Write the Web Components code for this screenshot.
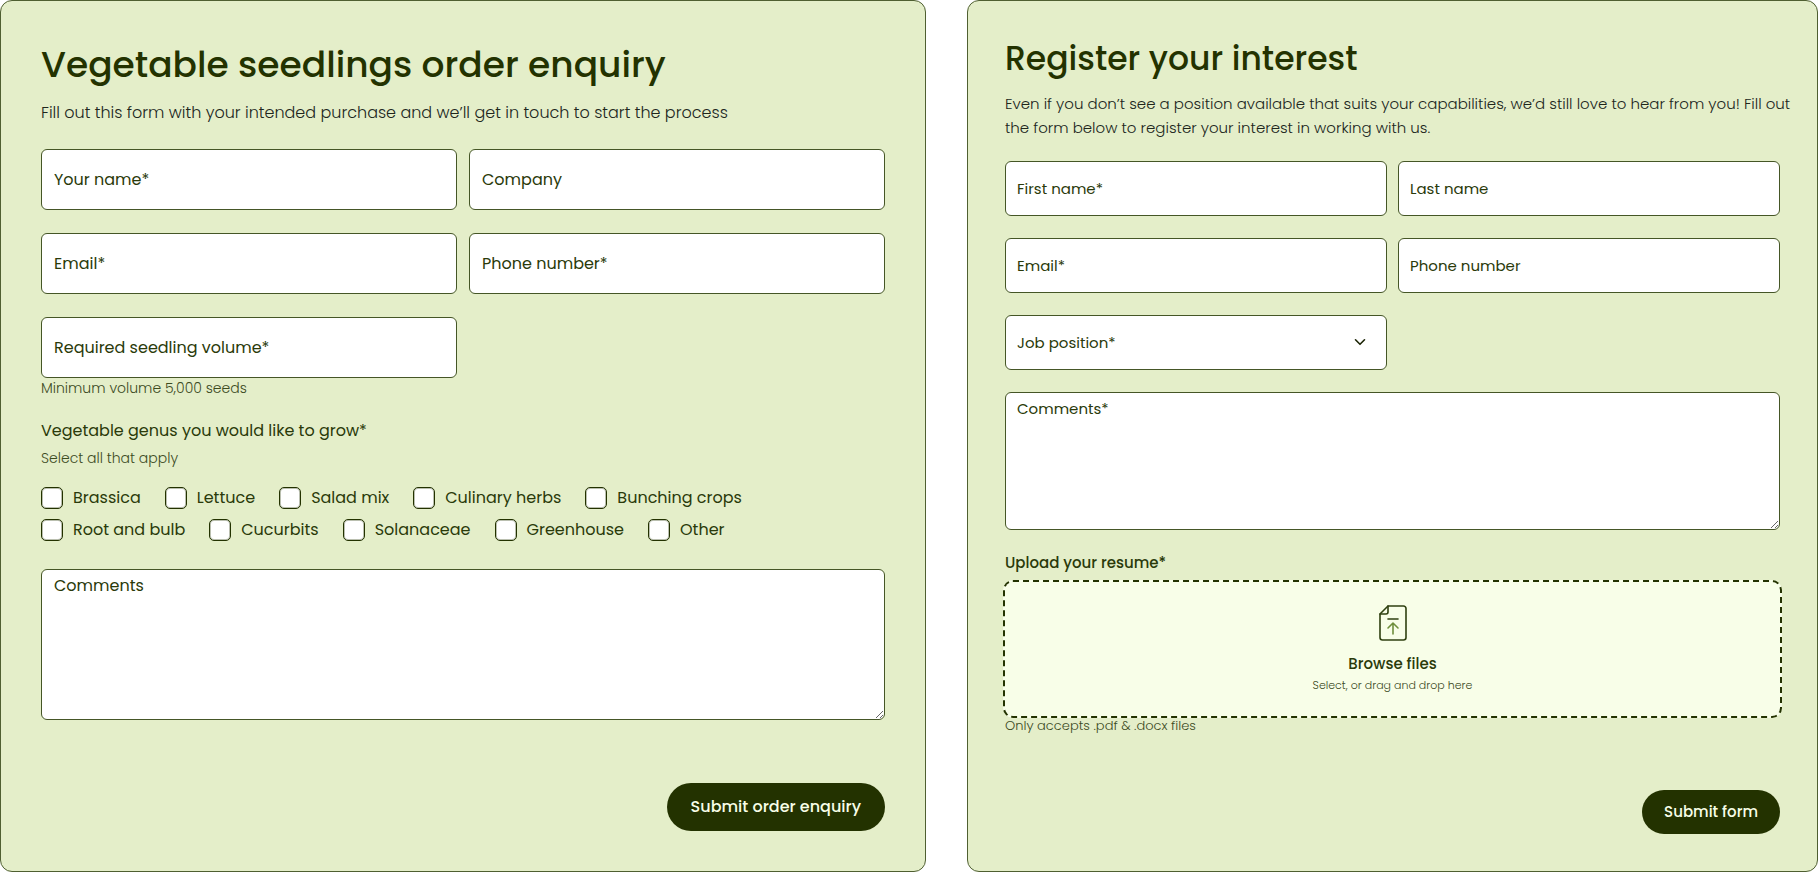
<!DOCTYPE html>
<html lang="en">
<head>
<meta charset="utf-8">
<title>Enquiry forms</title>
<style>
  body { margin: 0; background: #fff; font-family: Poppins, "Noto Sans", sans-serif; color: #2a3a0a; }
  main { display: grid; grid-template-columns: minmax(0, 926fr) minmax(0, 851fr); gap: 41px; }
  .order {
    --pad: 40px; --title: 36px; --title-line: 48px; --text: 16px; --small: 14px; --small-line: 20px;
    --intro-end: 24px; --row: 23px; --col: 12px; --field: 61px; --inset: 12px;
    --area: 151px; --button: 48px; --button-pad: 24px;
  }
  .register {
    --pad: 37px; --title: 33px; --title-line: 42px; --text: 15px; --small: 13px; --small-line: 16px;
    --intro-end: 21px; --row: 22px; --col: 11px; --field: 55px; --inset: 11px;
    --area: 138px; --button: 44px; --button-pad: 22px;
  }
  .genus { margin-top: -2px; }
  .order area-field { margin-top: 5px; }
</style>
</head>
<body>
<main>
  <form-card class="order">
    <span slot="title">Vegetable seedlings order enquiry</span>
    <span slot="intro">Fill out this form with your intended purchase and we’ll get in touch to start the process</span>
    <field-row>
      <text-field label="Your name*"></text-field>
      <text-field label="Company"></text-field>
    </field-row>
    <field-row>
      <text-field label="Email*" type="email"></text-field>
      <text-field label="Phone number*" type="tel"></text-field>
    </field-row>
    <field-row>
      <text-field label="Required seedling volume*">Minimum volume 5,000 seeds</text-field>
    </field-row>
    <check-group class="genus">
      <span slot="legend">Vegetable genus you would like to grow*</span>
      <span slot="hint">Select all that apply</span>
      <check-option>Brassica</check-option>
      <check-option>Lettuce</check-option>
      <check-option>Salad mix</check-option>
      <check-option>Culinary herbs</check-option>
      <check-option>Bunching crops</check-option>
      <check-option slot="more">Root and bulb</check-option>
      <check-option slot="more">Cucurbits</check-option>
      <check-option slot="more">Solanaceae</check-option>
      <check-option slot="more">Greenhouse</check-option>
      <check-option slot="more">Other</check-option>
    </check-group>
    <area-field label="Comments"></area-field>
    <submit-button slot="action">Submit order enquiry</submit-button>
  </form-card>

  <form-card class="register">
    <span slot="title">Register your interest</span>
    <span slot="intro">Even if you don’t see a position available that suits your capabilities, we’d still love to hear from you! Fill out the form below to register your interest in working with us.</span>
    <field-row>
      <text-field label="First name*"></text-field>
      <text-field label="Last name"></text-field>
    </field-row>
    <field-row>
      <text-field label="Email*" type="email"></text-field>
      <text-field label="Phone number" type="tel"></text-field>
    </field-row>
    <field-row>
      <select-field label="Job position*"></select-field>
    </field-row>
    <area-field label="Comments*"></area-field>
    <file-drop>
      <span slot="label">Upload your resume*</span>
      <span slot="hint">Only accepts .pdf &amp; .docx files</span>
    </file-drop>
    <submit-button slot="action">Submit form</submit-button>
  </form-card>
</main>

<script>
const define = (name, html, setup) => customElements.define(name, class extends HTMLElement {
  connectedCallback() {
    if (this.shadowRoot) return;
    const root = this.attachShadow({ mode: 'open' });
    const template = document.createElement('template');
    template.innerHTML = '<style>*{box-sizing:border-box}:host{display:block;min-width:0}</style>' + html;
    root.append(template.content.cloneNode(true));
    if (setup) setup(this, root);
  }
});

// Look shared by every box the user types or picks in
const control = `
  .control {
    display: block; width: 100%; height: var(--field); margin: 0; padding: 0 var(--inset);
    border: 1px solid #455626; border-radius: 6px; background: #fff;
    font: 400 var(--text)/24px Poppins, "Noto Sans", sans-serif; color: #2a3a0a; outline-color: #233200;
  }
  .control::placeholder { color: #2a3a0a; opacity: 1; }`;

const nameControl = (host, el) => {
  el.setAttribute('aria-label', host.getAttribute('label'));
  el.placeholder = host.getAttribute('label');
};

define('form-card', `
  <style>
    :host { background: #e4eec9; border: 1px solid #4f5f31; border-radius: 12px; box-sizing: border-box; padding: var(--pad); }
    form { display: flex; flex-direction: column; height: 100%; }
    h2 { margin: 0 0 12px; font-size: var(--title); line-height: var(--title-line); font-weight: 500; color: #233200; }
    p { margin: 0 -16px var(--intro-end) 0; font-size: var(--text); line-height: 24px; font-weight: 300; color: #20261c; }
    .fields { display: flex; flex-direction: column; gap: var(--row); }
    .action { display: flex; justify-content: flex-end; margin-top: auto; padding-top: 56px; }
  </style>
  <form>
    <h2><slot name="title"></slot></h2>
    <p><slot name="intro"></slot></p>
    <div class="fields"><slot></slot></div>
    <div class="action"><slot name="action"></slot></div>
  </form>`);

define('field-row', `
  <style>:host { display: grid; grid-template-columns: repeat(2, minmax(0, 1fr)); gap: var(--col); }</style>
  <slot></slot>`);

define('text-field', `
  <style>${control}
    .hint { font-size: var(--small); line-height: var(--small-line); font-weight: 300; color: #3c4b1f; }
  </style>
  <input class="control"><div class="hint"><slot></slot></div>`, (host, root) => {
  const input = root.querySelector('input');
  input.type = host.getAttribute('type') || 'text';
  nameControl(host, input);
});

define('area-field', `
  <style>${control}
    textarea.control { height: var(--area); padding: 4px var(--inset); resize: vertical; }
  </style>
  <textarea class="control"></textarea>`, (host, root) => nameControl(host, root.querySelector('textarea')));

define('select-field', `
  <style>${control}
    :host { position: relative; }
    select { appearance: none; }
    svg { position: absolute; right: 21px; top: calc(50% - 7px); pointer-events: none; }
  </style>
  <select class="control"><option></option><option>Nursery hand</option><option>Grower</option></select>
  <svg width="12" height="12" viewBox="0 0 12 12" fill="none" stroke="#1c2506" stroke-width="1.6" stroke-linecap="round" stroke-linejoin="round"><path d="M1.500 3.800l4.500 4.500 4.500-4.500"/></svg>`, (host, root) => {
  const label = host.getAttribute('label');
  root.querySelector('select').setAttribute('aria-label', label);
  root.querySelector('option').textContent = label;
});

define('check-group', `
  <style>
    fieldset { margin: 0; padding: 0; border: 0; min-width: 0; }
    legend { padding: 0; font-size: var(--text); line-height: 24px; }
    .hint { margin: 5px 0 19px; font-size: var(--small); line-height: 20px; font-weight: 300; color: #3c4b1f; }
    .row { display: flex; flex-wrap: wrap; gap: 10px 24px; }
    .row + .row { margin-top: 10px; }
  </style>
  <fieldset>
    <legend><slot name="legend"></slot></legend>
    <div class="hint"><slot name="hint"></slot></div>
    <div class="row"><slot></slot></div>
    <div class="row"><slot name="more"></slot></div>
  </fieldset>`);

define('check-option', `
  <style>
    label { display: flex; align-items: center; gap: 10px; font-size: var(--text); line-height: 22px; white-space: nowrap; }
    input { appearance: none; flex: none; width: 22px; height: 22px; margin: 0; border: 1px solid #233200; border-radius: 5px; background: #fff; box-shadow: inset 0 0 0 1px #23320050; }
    input:checked { background: #233200; box-shadow: inset 0 0 0 4px #fff; }
  </style>
  <label><input type="checkbox"><slot></slot></label>`);

define('file-drop', `
  <style>
    .title { display: block; font-size: var(--text); line-height: 22px; font-weight: 500; }
    .zone {
      position: relative; display: flex; flex-direction: column; align-items: center; justify-content: center;
      height: 138px; margin: 6px -2px 0; border: 2px dashed #233200; border-radius: 10px; background: #f8fee8; cursor: pointer;
    }
    input { position: absolute; inset: 0; width: 100%; height: 100%; opacity: 0; cursor: pointer; font-size: 0; }
    svg { margin-bottom: 11px; }
    strong { font-size: var(--text); line-height: 24px; font-weight: 500; }
    small { font-size: 11px; line-height: 18px; font-weight: 300; color: #3c4b1f; }
    .hint { font-size: var(--small); line-height: var(--small-line); font-weight: 300; color: #3c4b1f; }
  </style>
  <label class="title" for="file"><slot name="label"></slot></label>
  <div class="zone">
    <svg width="28" height="36" viewBox="0 0 28 36" fill="none" stroke="#2f4010" stroke-width="1.6" stroke-linecap="round" stroke-linejoin="round">
      <path d="M9 1h15.500a2.500 2.500 0 0 1 2.500 2.500v29a2.500 2.500 0 0 1-2.500 2.500h-21a2.500 2.500 0 0 1-2.500-2.500V9z"/>
      <path d="M9 1v6a2 2 0 0 1-2 2H1"/>
      <path d="M9 14h10"/>
      <path stroke="#6f8f3c" d="M14 29V18.500M9 23l5-5 5 5"/>
    </svg>
    <strong>Browse files</strong>
    <small>Select, or drag and drop here</small>
    <input id="file" type="file" accept=".pdf,.docx">
  </div>
  <div class="hint"><slot name="hint"></slot></div>`);

define('submit-button', `
  <style>
    button {
      display: block; height: var(--button); margin: 0; padding: 0 var(--button-pad); border: 0; border-radius: 24px;
      background: #233200; color: #f8fee8; font: 500 var(--text)/24px Poppins, "Noto Sans", sans-serif; cursor: pointer;
    }
  </style>
  <button type="submit"><slot></slot></button>`);
</script>
</body>
</html>
